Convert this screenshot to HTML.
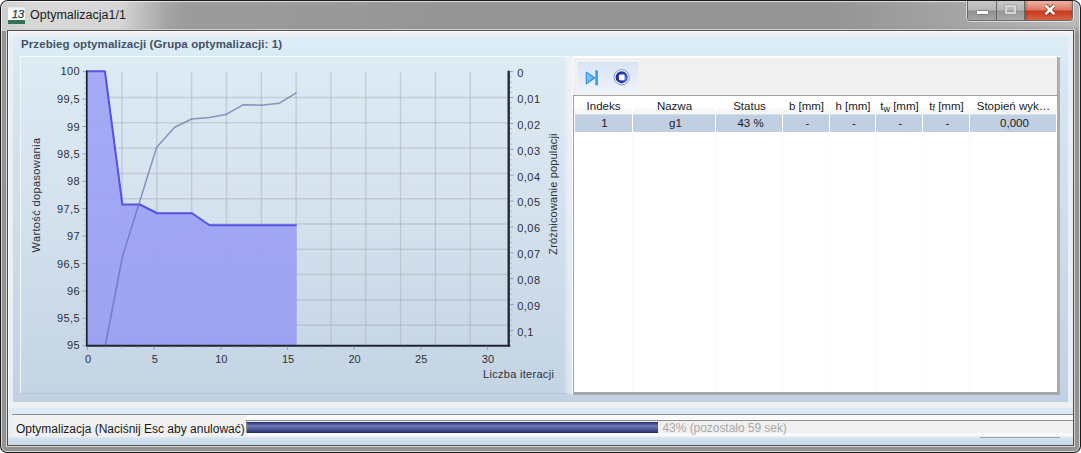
<!DOCTYPE html>
<html>
<head>
<meta charset="utf-8">
<title>Optymalizacja1/1</title>
<style>
html,body{margin:0;padding:0;}
body{width:1081px;height:453px;overflow:hidden;background:#fff;font-family:"Liberation Sans",sans-serif;position:relative;}
div,span{position:absolute;box-sizing:border-box;}
.t{white-space:nowrap;line-height:1;}
.ax{font-size:11px;color:#2b3039;}
#win{left:0;top:0;width:1081px;height:453px;background:#1c1c1c;border-radius:8px 8px 7px 7px;}
#frame{left:1px;top:1px;width:1079px;height:451px;border-radius:7px 7px 6px 6px;overflow:hidden;
 background:linear-gradient(to bottom,#9a9a9a 0px,#949494 6px,#939393 451px);}
#sheen{left:0;top:0;width:1079px;height:34px;background:linear-gradient(to right,rgba(255,255,255,.10) 0,rgba(255,255,255,.05) 330px,rgba(255,255,255,0) 480px,rgba(255,255,255,0) 820px,rgba(255,255,255,.17) 965px,rgba(255,255,255,.36) 1079px);-webkit-mask-image:linear-gradient(to bottom,#000 0,#000 24px,transparent 34px);mask-image:linear-gradient(to bottom,#000 0,#000 24px,transparent 34px);}
#glow{left:0;top:0;width:190px;height:30px;background:linear-gradient(to right,rgba(255,255,255,.5) 0,rgba(255,255,255,.6) 30px,rgba(255,255,255,.58) 120px,rgba(255,255,255,.3) 145px,rgba(255,255,255,.08) 168px,rgba(255,255,255,0) 185px);}
#frameHi{left:0;top:0;width:1079px;height:451px;border-radius:7px 7px 6px 6px;border:1px solid rgba(255,255,255,.62);}
#title{left:30px;top:9.3px;font-size:12.5px;letter-spacing:0px;color:#1a1a1a;}
#clientBorder{left:7px;top:29.7px;width:1067px;height:416.1px;background:#4f4f4f;}
#client{left:8px;top:31px;width:1065px;height:414px;background:#e7f0f7;overflow:hidden;}
.hd{font-size:11.5px;color:#1c1c1c;text-align:center;top:101.3px;height:12px;}
.cell{font-size:11.5px;color:#1c1c1c;text-align:center;top:118.3px;height:12px;}
.sep{top:96px;width:1px;height:36px;background:#fff;}
.vl{top:132px;width:1px;height:260px;background:#fafafa;}
</style>
</head>
<body>
<div id="win">
 <div id="frame"><div id="sheen"></div><div id="glow"></div><div id="frameHi"></div></div>
 <div id="icon" style="left:8px;top:7px;width:17px;height:17px;background:linear-gradient(to bottom,#e8e8e8,#fff 30%);">
  <span class="t" style="left:3.8px;top:1.7px;font-size:11.5px;font-style:italic;color:#2a453d;letter-spacing:-0.5px;-webkit-text-stroke:0.25px #2a453d;">13</span>
  <div style="left:0;top:13.1px;width:17px;height:3.6px;background:#2f7358;"></div>
 </div>
 <span id="title" class="t">Optymalizacja1/1</span>

 <!-- caption buttons -->
 <div id="caps" style="left:966px;top:1px;width:108px;height:20.5px;border-radius:0 0 5px 5px;border:1px solid rgba(255,255,255,.55);border-top:none;"></div>
 <div id="capsIn" style="left:967px;top:1px;width:106px;height:19.5px;border-radius:0 0 4px 4px;overflow:hidden;border:1px solid #6b6b6b;border-top:none;">
   <div style="left:0;top:0;width:28px;height:20px;background:linear-gradient(to bottom,#c8c8c8 0,#b6b6b6 45%,#8f8f8f 50%,#a8a8a8 100%);"></div>
   <div style="left:28px;top:0;width:1px;height:20px;background:#666;"></div>
   <div style="left:29px;top:0;width:26.5px;height:20px;background:linear-gradient(to bottom,#c8c8c8 0,#b6b6b6 45%,#969696 50%,#acacac 100%);"></div>
   <div style="left:55.5px;top:0;width:1px;height:20px;background:#666;"></div>
   <div style="left:56.5px;top:0;width:48.5px;height:20px;background:linear-gradient(to right,rgba(120,30,10,.35) 0,rgba(120,30,10,0) 3px,rgba(120,30,10,0) 45px,rgba(120,30,10,.35) 48.5px),linear-gradient(to bottom,#ecb2a4 0,#dc7a66 45%,#c7391c 50%,#da6648 100%);"></div>
 </div>
 <!-- min glyph -->
 <div style="left:976px;top:10.2px;width:12.5px;height:5px;border-radius:1.5px;background:#fff;border:1px solid #7a7a7a;"></div>
 <!-- max glyph -->
 <div style="left:1005px;top:5px;width:11px;height:9px;border:2px solid #d6d6d6;border-radius:1px;box-shadow:0 0 0 1px rgba(150,150,150,.6);"></div>
 <!-- close glyph -->
 <svg style="position:absolute;left:1041px;top:2px" width="18" height="16" viewBox="0 0 18 16"><path d="M4.6 3.6 L13.2 12.2 M13.2 3.6 L4.6 12.2" stroke="#6a2a20" stroke-opacity=".75" stroke-width="4.2" stroke-linecap="butt"/><path d="M4.6 3.6 L13.2 12.2 M13.2 3.6 L4.6 12.2" stroke="#fff" stroke-width="2.6" stroke-linecap="butt"/></svg>

 <div style="left:6px;top:28.6px;width:1069px;height:418.4px;background:#d2d2d2;"></div>
 <div id="clientBorder"></div>
 <div id="client"></div>

 <!-- client white edge -->
 <div style="left:8px;top:31px;width:1065px;height:1px;background:#f7fbfd;"></div>
 <div style="left:8px;top:31px;width:1px;height:384px;background:#f7fbfd;"></div>
 <!-- group panel -->
 <div id="group" style="left:13px;top:33px;width:1055px;height:369px;background:linear-gradient(to bottom,#dceef7 0,#dbebf5 22px,#d8e6f2 40px,#c2d1e3 100%);"></div>
 <div style="left:9px;top:32px;width:1064px;height:5.5px;background:linear-gradient(to bottom,#f4f3f7 0,rgba(238,239,244,.95) 50%,rgba(232,240,248,.0) 100%);"></div>
 <span class="t" style="left:21px;top:39.2px;font-size:11.5px;font-weight:bold;color:#445166;letter-spacing:.09px;">Przebieg optymalizacji (Grupa optymalizacji: 1)</span>

 <!-- chart panel -->
 <div id="chart" style="left:20px;top:56px;width:550px;height:338px;background:linear-gradient(to bottom,#ddebf4 0,#d6e3ef 40%,#c4d4e4 100%);border-top:1px solid #f6fafc;border-left:1px solid #f2f7fb;border-bottom:1px solid #b4c3d4;"></div>
 <svg style="position:absolute;left:0;top:0" width="1081" height="453" viewBox="0 0 1081 453">
<line x1="122.02" y1="72" x2="122.02" y2="345" stroke="#a4a9b4" stroke-opacity="0.42" stroke-width="1.5"/>
<line x1="156.84" y1="72" x2="156.84" y2="345" stroke="#a4a9b4" stroke-opacity="0.42" stroke-width="1.5"/>
<line x1="191.66" y1="72" x2="191.66" y2="345" stroke="#a4a9b4" stroke-opacity="0.42" stroke-width="1.5"/>
<line x1="226.48" y1="72" x2="226.48" y2="345" stroke="#a4a9b4" stroke-opacity="0.42" stroke-width="1.5"/>
<line x1="261.30" y1="72" x2="261.30" y2="345" stroke="#a4a9b4" stroke-opacity="0.42" stroke-width="1.5"/>
<line x1="296.12" y1="72" x2="296.12" y2="345" stroke="#a4a9b4" stroke-opacity="0.42" stroke-width="1.5"/>
<line x1="330.94" y1="72" x2="330.94" y2="345" stroke="#a4a9b4" stroke-opacity="0.42" stroke-width="1.5"/>
<line x1="365.76" y1="72" x2="365.76" y2="345" stroke="#a4a9b4" stroke-opacity="0.42" stroke-width="1.5"/>
<line x1="400.58" y1="72" x2="400.58" y2="345" stroke="#a4a9b4" stroke-opacity="0.42" stroke-width="1.5"/>
<line x1="435.40" y1="72" x2="435.40" y2="345" stroke="#a4a9b4" stroke-opacity="0.42" stroke-width="1.5"/>
<line x1="470.22" y1="72" x2="470.22" y2="345" stroke="#a4a9b4" stroke-opacity="0.42" stroke-width="1.5"/>
<line x1="88" y1="97.50" x2="509" y2="97.50" stroke="#a4a9b4" stroke-opacity="0.42" stroke-width="1.5"/>
<line x1="88" y1="122.80" x2="509" y2="122.80" stroke="#a4a9b4" stroke-opacity="0.42" stroke-width="1.5"/>
<line x1="88" y1="148.10" x2="509" y2="148.10" stroke="#a4a9b4" stroke-opacity="0.42" stroke-width="1.5"/>
<line x1="88" y1="173.40" x2="509" y2="173.40" stroke="#a4a9b4" stroke-opacity="0.42" stroke-width="1.5"/>
<line x1="88" y1="198.70" x2="509" y2="198.70" stroke="#a4a9b4" stroke-opacity="0.42" stroke-width="1.5"/>
<line x1="88" y1="224.00" x2="509" y2="224.00" stroke="#a4a9b4" stroke-opacity="0.42" stroke-width="1.5"/>
<line x1="88" y1="249.30" x2="509" y2="249.30" stroke="#a4a9b4" stroke-opacity="0.42" stroke-width="1.5"/>
<line x1="88" y1="274.60" x2="509" y2="274.60" stroke="#a4a9b4" stroke-opacity="0.42" stroke-width="1.5"/>
<line x1="88" y1="299.90" x2="509" y2="299.90" stroke="#a4a9b4" stroke-opacity="0.42" stroke-width="1.5"/>
<line x1="88" y1="325.20" x2="509" y2="325.20" stroke="#a4a9b4" stroke-opacity="0.42" stroke-width="1.5"/>
<defs><linearGradient id="bgg" gradientUnits="userSpaceOnUse" x1="0" y1="56" x2="0" y2="394"><stop offset="0" stop-color="#ddebf4"/><stop offset="0.4" stop-color="#d6e3ef"/><stop offset="1" stop-color="#c4d4e4"/></linearGradient></defs>
<polygon points="87.50,71.20 104.93,71.20 122.36,204.50 139.79,204.50 157.22,213.25 174.65,213.25 192.08,213.25 209.51,225.25 226.94,225.25 244.37,225.25 261.80,225.25 279.23,225.25 296.66,225.25 296.66,345.50 87.50,345.50" fill="url(#bgg)" fill-opacity="0.8"/>
<polygon points="87.50,71.20 104.93,71.20 122.36,204.50 139.79,204.50 157.22,213.25 174.65,213.25 192.08,213.25 209.51,225.25 226.94,225.25 244.37,225.25 261.80,225.25 279.23,225.25 296.66,225.25 296.66,345.50 87.50,345.50" fill="#8282f8" fill-opacity="0.62"/>
<polyline points="87.50,71.20 104.93,71.20 122.36,204.50 139.79,204.50 157.22,213.25 174.65,213.25 192.08,213.25 209.51,225.25 226.94,225.25 244.37,225.25 261.80,225.25 279.23,225.25 296.66,225.25" fill="none" stroke="#5452e2" stroke-width="2" stroke-linejoin="round"/>
<polyline points="105.30,345.50 122.60,256.00 139.90,201.00 156.50,147.60 174.60,127.20 191.60,119.00 209.20,117.40 225.70,114.60 243.00,104.80 261.40,105.20 279.20,103.30 296.50,92.60" fill="none" stroke="#6670a8" stroke-opacity="0.72" stroke-width="1.5" stroke-linejoin="round"/>
<line x1="86.8" y1="70.3" x2="86.8" y2="346.5" stroke="#1f2530" stroke-width="1.8"/>
<line x1="86" y1="345.7" x2="510.3" y2="345.7" stroke="#1f2530" stroke-width="2"/>
<line x1="508.7" y1="70.7" x2="508.7" y2="346.5" stroke="#1f2530" stroke-width="2.3"/>
<line x1="82.5" y1="71.70" x2="86" y2="71.70" stroke="#939cab" stroke-width="1"/>
<line x1="84" y1="77.18" x2="86" y2="77.18" stroke="#b0b8c4" stroke-width="1"/>
<line x1="84" y1="82.66" x2="86" y2="82.66" stroke="#b0b8c4" stroke-width="1"/>
<line x1="84" y1="88.14" x2="86" y2="88.14" stroke="#b0b8c4" stroke-width="1"/>
<line x1="84" y1="93.62" x2="86" y2="93.62" stroke="#b0b8c4" stroke-width="1"/>
<line x1="82.5" y1="99.10" x2="86" y2="99.10" stroke="#939cab" stroke-width="1"/>
<line x1="84" y1="104.58" x2="86" y2="104.58" stroke="#b0b8c4" stroke-width="1"/>
<line x1="84" y1="110.06" x2="86" y2="110.06" stroke="#b0b8c4" stroke-width="1"/>
<line x1="84" y1="115.54" x2="86" y2="115.54" stroke="#b0b8c4" stroke-width="1"/>
<line x1="84" y1="121.02" x2="86" y2="121.02" stroke="#b0b8c4" stroke-width="1"/>
<line x1="82.5" y1="126.50" x2="86" y2="126.50" stroke="#939cab" stroke-width="1"/>
<line x1="84" y1="131.98" x2="86" y2="131.98" stroke="#b0b8c4" stroke-width="1"/>
<line x1="84" y1="137.46" x2="86" y2="137.46" stroke="#b0b8c4" stroke-width="1"/>
<line x1="84" y1="142.94" x2="86" y2="142.94" stroke="#b0b8c4" stroke-width="1"/>
<line x1="84" y1="148.42" x2="86" y2="148.42" stroke="#b0b8c4" stroke-width="1"/>
<line x1="82.5" y1="153.90" x2="86" y2="153.90" stroke="#939cab" stroke-width="1"/>
<line x1="84" y1="159.38" x2="86" y2="159.38" stroke="#b0b8c4" stroke-width="1"/>
<line x1="84" y1="164.86" x2="86" y2="164.86" stroke="#b0b8c4" stroke-width="1"/>
<line x1="84" y1="170.34" x2="86" y2="170.34" stroke="#b0b8c4" stroke-width="1"/>
<line x1="84" y1="175.82" x2="86" y2="175.82" stroke="#b0b8c4" stroke-width="1"/>
<line x1="82.5" y1="181.30" x2="86" y2="181.30" stroke="#939cab" stroke-width="1"/>
<line x1="84" y1="186.78" x2="86" y2="186.78" stroke="#b0b8c4" stroke-width="1"/>
<line x1="84" y1="192.26" x2="86" y2="192.26" stroke="#b0b8c4" stroke-width="1"/>
<line x1="84" y1="197.74" x2="86" y2="197.74" stroke="#b0b8c4" stroke-width="1"/>
<line x1="84" y1="203.22" x2="86" y2="203.22" stroke="#b0b8c4" stroke-width="1"/>
<line x1="82.5" y1="208.70" x2="86" y2="208.70" stroke="#939cab" stroke-width="1"/>
<line x1="84" y1="214.18" x2="86" y2="214.18" stroke="#b0b8c4" stroke-width="1"/>
<line x1="84" y1="219.66" x2="86" y2="219.66" stroke="#b0b8c4" stroke-width="1"/>
<line x1="84" y1="225.14" x2="86" y2="225.14" stroke="#b0b8c4" stroke-width="1"/>
<line x1="84" y1="230.62" x2="86" y2="230.62" stroke="#b0b8c4" stroke-width="1"/>
<line x1="82.5" y1="236.10" x2="86" y2="236.10" stroke="#939cab" stroke-width="1"/>
<line x1="84" y1="241.58" x2="86" y2="241.58" stroke="#b0b8c4" stroke-width="1"/>
<line x1="84" y1="247.06" x2="86" y2="247.06" stroke="#b0b8c4" stroke-width="1"/>
<line x1="84" y1="252.54" x2="86" y2="252.54" stroke="#b0b8c4" stroke-width="1"/>
<line x1="84" y1="258.02" x2="86" y2="258.02" stroke="#b0b8c4" stroke-width="1"/>
<line x1="82.5" y1="263.50" x2="86" y2="263.50" stroke="#939cab" stroke-width="1"/>
<line x1="84" y1="268.98" x2="86" y2="268.98" stroke="#b0b8c4" stroke-width="1"/>
<line x1="84" y1="274.46" x2="86" y2="274.46" stroke="#b0b8c4" stroke-width="1"/>
<line x1="84" y1="279.94" x2="86" y2="279.94" stroke="#b0b8c4" stroke-width="1"/>
<line x1="84" y1="285.42" x2="86" y2="285.42" stroke="#b0b8c4" stroke-width="1"/>
<line x1="82.5" y1="290.90" x2="86" y2="290.90" stroke="#939cab" stroke-width="1"/>
<line x1="84" y1="296.38" x2="86" y2="296.38" stroke="#b0b8c4" stroke-width="1"/>
<line x1="84" y1="301.86" x2="86" y2="301.86" stroke="#b0b8c4" stroke-width="1"/>
<line x1="84" y1="307.34" x2="86" y2="307.34" stroke="#b0b8c4" stroke-width="1"/>
<line x1="84" y1="312.82" x2="86" y2="312.82" stroke="#b0b8c4" stroke-width="1"/>
<line x1="82.5" y1="318.30" x2="86" y2="318.30" stroke="#939cab" stroke-width="1"/>
<line x1="84" y1="323.78" x2="86" y2="323.78" stroke="#b0b8c4" stroke-width="1"/>
<line x1="84" y1="329.26" x2="86" y2="329.26" stroke="#b0b8c4" stroke-width="1"/>
<line x1="84" y1="334.74" x2="86" y2="334.74" stroke="#b0b8c4" stroke-width="1"/>
<line x1="84" y1="340.22" x2="86" y2="340.22" stroke="#b0b8c4" stroke-width="1"/>
<line x1="82.5" y1="345.70" x2="86" y2="345.70" stroke="#939cab" stroke-width="1"/>
<line x1="510" y1="71.70" x2="513.3" y2="71.70" stroke="#939cab" stroke-width="1"/>
<line x1="510" y1="76.87" x2="512" y2="76.87" stroke="#b0b8c4" stroke-width="1"/>
<line x1="510" y1="82.05" x2="512" y2="82.05" stroke="#b0b8c4" stroke-width="1"/>
<line x1="510" y1="87.22" x2="512" y2="87.22" stroke="#b0b8c4" stroke-width="1"/>
<line x1="510" y1="92.40" x2="512" y2="92.40" stroke="#b0b8c4" stroke-width="1"/>
<line x1="510" y1="97.57" x2="513.3" y2="97.57" stroke="#939cab" stroke-width="1"/>
<line x1="510" y1="102.74" x2="512" y2="102.74" stroke="#b0b8c4" stroke-width="1"/>
<line x1="510" y1="107.92" x2="512" y2="107.92" stroke="#b0b8c4" stroke-width="1"/>
<line x1="510" y1="113.09" x2="512" y2="113.09" stroke="#b0b8c4" stroke-width="1"/>
<line x1="510" y1="118.27" x2="512" y2="118.27" stroke="#b0b8c4" stroke-width="1"/>
<line x1="510" y1="123.44" x2="513.3" y2="123.44" stroke="#939cab" stroke-width="1"/>
<line x1="510" y1="128.61" x2="512" y2="128.61" stroke="#b0b8c4" stroke-width="1"/>
<line x1="510" y1="133.79" x2="512" y2="133.79" stroke="#b0b8c4" stroke-width="1"/>
<line x1="510" y1="138.96" x2="512" y2="138.96" stroke="#b0b8c4" stroke-width="1"/>
<line x1="510" y1="144.14" x2="512" y2="144.14" stroke="#b0b8c4" stroke-width="1"/>
<line x1="510" y1="149.31" x2="513.3" y2="149.31" stroke="#939cab" stroke-width="1"/>
<line x1="510" y1="154.48" x2="512" y2="154.48" stroke="#b0b8c4" stroke-width="1"/>
<line x1="510" y1="159.66" x2="512" y2="159.66" stroke="#b0b8c4" stroke-width="1"/>
<line x1="510" y1="164.83" x2="512" y2="164.83" stroke="#b0b8c4" stroke-width="1"/>
<line x1="510" y1="170.01" x2="512" y2="170.01" stroke="#b0b8c4" stroke-width="1"/>
<line x1="510" y1="175.18" x2="513.3" y2="175.18" stroke="#939cab" stroke-width="1"/>
<line x1="510" y1="180.35" x2="512" y2="180.35" stroke="#b0b8c4" stroke-width="1"/>
<line x1="510" y1="185.53" x2="512" y2="185.53" stroke="#b0b8c4" stroke-width="1"/>
<line x1="510" y1="190.70" x2="512" y2="190.70" stroke="#b0b8c4" stroke-width="1"/>
<line x1="510" y1="195.88" x2="512" y2="195.88" stroke="#b0b8c4" stroke-width="1"/>
<line x1="510" y1="201.05" x2="513.3" y2="201.05" stroke="#939cab" stroke-width="1"/>
<line x1="510" y1="206.22" x2="512" y2="206.22" stroke="#b0b8c4" stroke-width="1"/>
<line x1="510" y1="211.40" x2="512" y2="211.40" stroke="#b0b8c4" stroke-width="1"/>
<line x1="510" y1="216.57" x2="512" y2="216.57" stroke="#b0b8c4" stroke-width="1"/>
<line x1="510" y1="221.75" x2="512" y2="221.75" stroke="#b0b8c4" stroke-width="1"/>
<line x1="510" y1="226.92" x2="513.3" y2="226.92" stroke="#939cab" stroke-width="1"/>
<line x1="510" y1="232.09" x2="512" y2="232.09" stroke="#b0b8c4" stroke-width="1"/>
<line x1="510" y1="237.27" x2="512" y2="237.27" stroke="#b0b8c4" stroke-width="1"/>
<line x1="510" y1="242.44" x2="512" y2="242.44" stroke="#b0b8c4" stroke-width="1"/>
<line x1="510" y1="247.62" x2="512" y2="247.62" stroke="#b0b8c4" stroke-width="1"/>
<line x1="510" y1="252.79" x2="513.3" y2="252.79" stroke="#939cab" stroke-width="1"/>
<line x1="510" y1="257.96" x2="512" y2="257.96" stroke="#b0b8c4" stroke-width="1"/>
<line x1="510" y1="263.14" x2="512" y2="263.14" stroke="#b0b8c4" stroke-width="1"/>
<line x1="510" y1="268.31" x2="512" y2="268.31" stroke="#b0b8c4" stroke-width="1"/>
<line x1="510" y1="273.49" x2="512" y2="273.49" stroke="#b0b8c4" stroke-width="1"/>
<line x1="510" y1="278.66" x2="513.3" y2="278.66" stroke="#939cab" stroke-width="1"/>
<line x1="510" y1="283.83" x2="512" y2="283.83" stroke="#b0b8c4" stroke-width="1"/>
<line x1="510" y1="289.01" x2="512" y2="289.01" stroke="#b0b8c4" stroke-width="1"/>
<line x1="510" y1="294.18" x2="512" y2="294.18" stroke="#b0b8c4" stroke-width="1"/>
<line x1="510" y1="299.36" x2="512" y2="299.36" stroke="#b0b8c4" stroke-width="1"/>
<line x1="510" y1="304.53" x2="513.3" y2="304.53" stroke="#939cab" stroke-width="1"/>
<line x1="510" y1="309.70" x2="512" y2="309.70" stroke="#b0b8c4" stroke-width="1"/>
<line x1="510" y1="314.88" x2="512" y2="314.88" stroke="#b0b8c4" stroke-width="1"/>
<line x1="510" y1="320.05" x2="512" y2="320.05" stroke="#b0b8c4" stroke-width="1"/>
<line x1="510" y1="325.23" x2="512" y2="325.23" stroke="#b0b8c4" stroke-width="1"/>
<line x1="510" y1="330.40" x2="513.3" y2="330.40" stroke="#939cab" stroke-width="1"/>
<line x1="510" y1="335.57" x2="512" y2="335.57" stroke="#b0b8c4" stroke-width="1"/>
<line x1="510" y1="340.75" x2="512" y2="340.75" stroke="#b0b8c4" stroke-width="1"/>
<line x1="87.50" y1="346.6" x2="87.50" y2="349.8" stroke="#939cab" stroke-width="1"/>
<line x1="104.16" y1="346.6" x2="104.16" y2="348.6" stroke="#b0b8c4" stroke-width="1"/>
<line x1="120.83" y1="346.6" x2="120.83" y2="348.6" stroke="#b0b8c4" stroke-width="1"/>
<line x1="137.49" y1="346.6" x2="137.49" y2="348.6" stroke="#b0b8c4" stroke-width="1"/>
<line x1="154.15" y1="346.6" x2="154.15" y2="349.8" stroke="#939cab" stroke-width="1"/>
<line x1="170.81" y1="346.6" x2="170.81" y2="348.6" stroke="#b0b8c4" stroke-width="1"/>
<line x1="187.48" y1="346.6" x2="187.48" y2="348.6" stroke="#b0b8c4" stroke-width="1"/>
<line x1="204.14" y1="346.6" x2="204.14" y2="348.6" stroke="#b0b8c4" stroke-width="1"/>
<line x1="220.80" y1="346.6" x2="220.80" y2="349.8" stroke="#939cab" stroke-width="1"/>
<line x1="237.46" y1="346.6" x2="237.46" y2="348.6" stroke="#b0b8c4" stroke-width="1"/>
<line x1="254.12" y1="346.6" x2="254.12" y2="348.6" stroke="#b0b8c4" stroke-width="1"/>
<line x1="270.79" y1="346.6" x2="270.79" y2="348.6" stroke="#b0b8c4" stroke-width="1"/>
<line x1="287.45" y1="346.6" x2="287.45" y2="349.8" stroke="#939cab" stroke-width="1"/>
<line x1="304.11" y1="346.6" x2="304.11" y2="348.6" stroke="#b0b8c4" stroke-width="1"/>
<line x1="320.78" y1="346.6" x2="320.78" y2="348.6" stroke="#b0b8c4" stroke-width="1"/>
<line x1="337.44" y1="346.6" x2="337.44" y2="348.6" stroke="#b0b8c4" stroke-width="1"/>
<line x1="354.10" y1="346.6" x2="354.10" y2="349.8" stroke="#939cab" stroke-width="1"/>
<line x1="370.76" y1="346.6" x2="370.76" y2="348.6" stroke="#b0b8c4" stroke-width="1"/>
<line x1="387.43" y1="346.6" x2="387.43" y2="348.6" stroke="#b0b8c4" stroke-width="1"/>
<line x1="404.09" y1="346.6" x2="404.09" y2="348.6" stroke="#b0b8c4" stroke-width="1"/>
<line x1="420.75" y1="346.6" x2="420.75" y2="349.8" stroke="#939cab" stroke-width="1"/>
<line x1="437.41" y1="346.6" x2="437.41" y2="348.6" stroke="#b0b8c4" stroke-width="1"/>
<line x1="454.07" y1="346.6" x2="454.07" y2="348.6" stroke="#b0b8c4" stroke-width="1"/>
<line x1="470.74" y1="346.6" x2="470.74" y2="348.6" stroke="#b0b8c4" stroke-width="1"/>
<line x1="487.40" y1="346.6" x2="487.40" y2="349.8" stroke="#939cab" stroke-width="1"/>
<line x1="504.06" y1="346.6" x2="504.06" y2="348.6" stroke="#b0b8c4" stroke-width="1"/>
</svg>
 <span class="t ax" style="right:1001.1px;top:66.2px;letter-spacing:.35px;">100</span>
<span class="t ax" style="right:1001.1px;top:94.2px;letter-spacing:.35px;">99,5</span>
<span class="t ax" style="right:1001.1px;top:121.6px;letter-spacing:.35px;">99</span>
<span class="t ax" style="right:1001.1px;top:149.0px;letter-spacing:.35px;">98,5</span>
<span class="t ax" style="right:1001.1px;top:176.4px;letter-spacing:.35px;">98</span>
<span class="t ax" style="right:1001.1px;top:203.8px;letter-spacing:.35px;">97,5</span>
<span class="t ax" style="right:1001.1px;top:231.2px;letter-spacing:.35px;">97</span>
<span class="t ax" style="right:1001.1px;top:258.6px;letter-spacing:.35px;">96,5</span>
<span class="t ax" style="right:1001.1px;top:286.0px;letter-spacing:.35px;">96</span>
<span class="t ax" style="right:1001.1px;top:313.4px;letter-spacing:.35px;">95,5</span>
<span class="t ax" style="right:1001.1px;top:340.2px;letter-spacing:.35px;">95</span>
<span class="t ax" style="left:517.2px;top:68.1px;letter-spacing:.5px;">0</span>
<span class="t ax" style="left:517.2px;top:94.0px;letter-spacing:.5px;">0,01</span>
<span class="t ax" style="left:517.2px;top:119.8px;letter-spacing:.5px;">0,02</span>
<span class="t ax" style="left:517.2px;top:145.7px;letter-spacing:.5px;">0,03</span>
<span class="t ax" style="left:517.2px;top:171.6px;letter-spacing:.5px;">0,04</span>
<span class="t ax" style="left:517.2px;top:197.4px;letter-spacing:.5px;">0,05</span>
<span class="t ax" style="left:517.2px;top:223.3px;letter-spacing:.5px;">0,06</span>
<span class="t ax" style="left:517.2px;top:249.2px;letter-spacing:.5px;">0,07</span>
<span class="t ax" style="left:517.2px;top:275.1px;letter-spacing:.5px;">0,08</span>
<span class="t ax" style="left:517.2px;top:300.9px;letter-spacing:.5px;">0,09</span>
<span class="t ax" style="left:517.2px;top:326.8px;letter-spacing:.5px;">0,1</span>
<span class="t ax" style="left:68.0px;top:354px;width:40px;text-align:center;">0</span>
<span class="t ax" style="left:134.7px;top:354px;width:40px;text-align:center;">5</span>
<span class="t ax" style="left:201.3px;top:354px;width:40px;text-align:center;">10</span>
<span class="t ax" style="left:268.0px;top:354px;width:40px;text-align:center;">15</span>
<span class="t ax" style="left:334.6px;top:354px;width:40px;text-align:center;">20</span>
<span class="t ax" style="left:401.2px;top:354px;width:40px;text-align:center;">25</span>
<span class="t ax" style="left:467.9px;top:354px;width:40px;text-align:center;">30</span>
 <span class="t ax" style="left:35.5px;top:195.3px;width:0;height:0;"><span class="t" style="left:0;top:0;transform:translate(-50%,-50%) rotate(-90deg);letter-spacing:.37px;">Wartość dopasowania</span></span>
 <span class="t ax" style="left:552.8px;top:193.5px;width:0;height:0;"><span class="t" style="left:0;top:0;transform:translate(-50%,-50%) rotate(-90deg);letter-spacing:.17px;">Zróżnicowanie populacji</span></span>
 <span class="t ax" style="left:483px;top:368.5px;letter-spacing:.3px;">Liczba iteracji</span>

 <!-- right panel -->
 <div style="left:564px;top:57px;width:8px;height:337px;background:linear-gradient(to right,rgba(255,255,255,0) 0,rgba(255,255,255,.38) 45%,rgba(255,255,255,.5) 100%);"></div><div id="rp" style="left:572px;top:56px;width:488px;height:339px;background:#f0f0f0;border-top:2px solid #fcfdfd;border-left:1px solid #f8fafb;"></div>
 <div style="left:1057.4px;top:57px;width:2.6px;height:338px;background:linear-gradient(to right,#a2a6a9,#b4b8bb);"></div>
 <div id="tb" style="left:578px;top:62px;width:60px;height:30.5px;background:linear-gradient(to bottom,#d8e4f5 0,#e4ecf9 55%,#eff3f9 100%);"></div>
 <svg style="position:absolute;left:580px;top:66px" width="56" height="24" viewBox="0 0 56 24">
  <defs>
   <linearGradient id="pg" x1="0" y1="0" x2="1" y2="1"><stop offset="0" stop-color="#a5dcf8"/><stop offset="1" stop-color="#3f9fe4"/></linearGradient>
   <radialGradient id="sg" cx="0.8" cy="0.6" r="0.8"><stop offset="0" stop-color="#4a7ad8"/><stop offset="0.5" stop-color="#2440ac"/><stop offset="1" stop-color="#1a2c98"/></radialGradient>
  </defs>
  <path d="M6.4 6.2 L14.6 11.9 L6.4 17.7 Z" fill="url(#pg)" stroke="#3596e2" stroke-width="1.3" stroke-linejoin="round"/>
  <rect x="15.3" y="4.3" width="2.6" height="15" fill="#3b9be2"/>
  <circle cx="41.7" cy="11.3" r="7.6" fill="#fff" stroke="#6f80c0" stroke-width="0.9"/>
  <circle cx="41.7" cy="11.3" r="6.1" fill="url(#sg)"/>
  <rect x="38.9" y="8.5" width="5.7" height="5.7" rx="1.2" fill="#fff"/>
 </svg>
 <!-- table -->
 <div id="table" style="left:573px;top:95px;width:487px;height:300px;background:#fff;border:1px solid #a2a2a2;border-right:3px solid #a8adb0;border-bottom:3px solid #a4a9ac;"></div>
 <div style="left:574px;top:96px;width:483px;height:18px;background:linear-gradient(to bottom,#fff 0,#fff 50%,#f2f3f5 100%);"></div>
 <div style="left:575px;top:114px;width:481px;height:18px;background:#c0d0e2;border-top:1px solid #d9e3ee;"></div>
 <div class="sep" style="left:632px;"></div><div class="sep" style="left:715px;"></div><div class="sep" style="left:782px;"></div><div class="sep" style="left:829px;"></div><div class="sep" style="left:875px;"></div><div class="sep" style="left:922px;"></div><div class="sep" style="left:969px;"></div>
 <div class="vl" style="left:632px;"></div><div class="vl" style="left:715px;"></div><div class="vl" style="left:782px;"></div><div class="vl" style="left:829px;"></div><div class="vl" style="left:875px;"></div><div class="vl" style="left:922px;"></div><div class="vl" style="left:969px;"></div>
 <span class="t hd" style="left:574.5px;width:58px;">Indeks</span>
 <span class="t hd" style="left:633.5px;width:82px;">Nazwa</span>
 <span class="t hd" style="left:716.5px;width:66px;">Status</span>
 <span class="t hd" style="left:783.5px;width:46px;">b [mm]</span>
 <span class="t hd" style="left:830.5px;width:45px;">h [mm]</span>
 <span class="t hd" style="left:876.5px;width:46px;">t<span style="position:relative;font-size:9px;top:1.5px;">w</span> [mm]</span>
 <span class="t hd" style="left:923.5px;width:46px;">t<span style="position:relative;font-size:9px;top:1px;">f</span> [mm]</span>
 <span class="t hd" style="left:970.5px;width:86px;">Stopień wyk…</span>
 <span class="t cell" style="left:575.5px;width:58px;">1</span>
 <span class="t cell" style="left:634.5px;width:82px;">g1</span>
 <span class="t cell" style="left:717.5px;width:66px;">43 %</span>
 <span class="t cell" style="left:784.5px;width:46px;">-</span>
 <span class="t cell" style="left:831.5px;width:45px;">-</span>
 <span class="t cell" style="left:877.5px;width:46px;">-</span>
 <span class="t cell" style="left:924.5px;width:46px;">-</span>
 <span class="t cell" style="left:971.5px;width:86px;">0,000</span>

 <!-- bottom bands -->
 <div style="left:9px;top:402px;width:1064px;height:6px;background:linear-gradient(to bottom,#eef3f1,#eaf1f3);"></div>
 <div style="left:9px;top:408px;width:1064px;height:6px;background:#dceaf6;"></div>
 <div style="left:12px;top:414px;width:1061px;height:1px;background:#8f8f8f;"></div>
 <div style="left:8px;top:414px;width:4px;height:31px;background:#e6eef4;"></div>
 <div style="left:12px;top:415px;width:1061px;height:21.5px;background:#f0f0f0;"></div>
 <div style="left:246px;top:415px;width:827px;height:5px;background:#fafafa;"></div>
 <div style="left:246px;top:420px;width:827px;height:1px;background:#8f8f8f;"></div>
 <div style="left:246px;top:420px;width:1px;height:15px;background:#8f8f8f;"></div>
 <div style="left:246px;top:433px;width:827px;height:4px;background:#f9f9fb;"></div>
 <div style="left:8px;top:436px;width:1065px;height:9px;background:linear-gradient(to bottom,#eef3f7 0,#d4e2ee 25%,#c8d9e7 100%);"></div>
 <div style="left:980px;top:437px;width:80px;height:1px;background:#8fa3b8;"></div>
 <div style="left:247px;top:422px;width:411px;height:11px;background:linear-gradient(to bottom,#1b2563 0,#3a4487 12%,#6e78b4 35%,#545e9e 60%,#2c3576 90%,#1b2563 100%);"></div>
 <span class="t" style="left:16px;top:422.5px;font-size:12px;color:#1a1a1a;letter-spacing:0px;">Optymalizacja (Naciśnij Esc aby anulować)</span>
 <span class="t" style="left:662.5px;top:422.3px;font-size:12px;color:#a9a9a9;letter-spacing:-.05px;">43% (pozostało 59 sek)</span>
</div>
</body>
</html>
